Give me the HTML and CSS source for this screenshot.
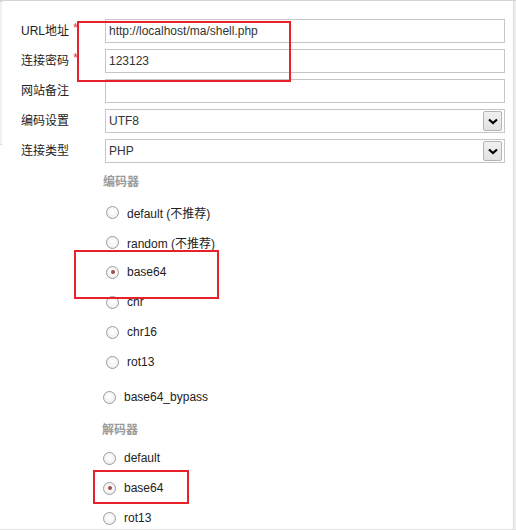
FILE: index.html
```html
<!DOCTYPE html>
<html lang="zh">
<head>
<meta charset="utf-8">
<link rel="stylesheet" href="styles.css">
</head>
<body>
<div class="frame">
  <div class="edge-left"></div>
  <div class="edge-right"></div>
  <form class="form">
    <div class="row">
      <label class="label">URL地址 <span class="req">*</span></label>
      <div class="field">http://localhost/ma/shell.php</div>
    </div>
    <div class="row">
      <label class="label">连接密码 <span class="req">*</span></label>
      <div class="field">123123</div>
    </div>
    <div class="row">
      <label class="label">网站备注</label>
      <div class="field"></div>
    </div>
    <div class="row">
      <label class="label">编码设置</label>
      <div class="field select">UTF8<span class="arrow"><svg width="10" height="7" viewBox="0 0 10 7"><path d="M1 1.5 L5 5 L9 1.5" fill="none" stroke="#000" stroke-width="2.2"/></svg></span></div>
    </div>
    <div class="row">
      <label class="label">连接类型</label>
      <div class="field select">PHP<span class="arrow"><svg width="10" height="7" viewBox="0 0 10 7"><path d="M1 1.5 L5 5 L9 1.5" fill="none" stroke="#000" stroke-width="2.2"/></svg></span></div>
    </div>

    <div class="group enc">
      <div class="ghead">编码器</div>
      <div class="opt"><span class="radio"></span>default (不推荐)</div>
      <div class="opt"><span class="radio"></span>random (不推荐)</div>
      <div class="opt"><span class="radio on"></span>base64</div>
      <div class="opt"><span class="radio"></span>chr</div>
      <div class="opt"><span class="radio"></span>chr16</div>
      <div class="opt"><span class="radio"></span>rot13</div>
    </div>
    <div class="group dec">
      <div class="opt"><span class="radio"></span>base64_bypass</div>
      <div class="ghead">解码器</div>
      <div class="opt"><span class="radio"></span>default</div>
      <div class="opt"><span class="radio on"></span>base64</div>
      <div class="opt"><span class="radio"></span>rot13</div>
    </div>
  </form>
  <div class="mark m1"></div>
  <div class="mark m2"></div>
  <div class="mark m3"></div>
</div>
</body>
</html>
```
FILE: styles.css
```css
html, body {
  margin: 0;
  padding: 0;
  background: #fff;
}
.frame {
  position: relative;
  width: 516px;
  height: 530px;
  overflow: hidden;
  box-sizing: border-box;
  border-top: 1px solid #d4d4d4;
  border-bottom: 1px solid #e2e2e2;
  font-family: "Liberation Sans", "Noto Sans CJK SC", sans-serif;
  font-size: 12px;
  color: #333;
}
.edge-left {
  position: absolute;
  left: 0;
  top: 0;
  width: 2px;
  height: 143px;
  background: #f1f1f1;
  border-bottom: 1px solid #d8d8d8;
  box-shadow: inset 0 51px 0 -50px #d4d4d4;
}
.edge-right {
  position: absolute;
  right: 0;
  top: 0;
  width: 2px;
  height: 530px;
  background: #ececec;
  border-left: 1px solid #dcdcdc;
}
.form {
  padding-top: 18px;
  margin: 0;
}
.row {
  display: flex;
  align-items: center;
  height: 24px;
  margin-bottom: 6px;
}
.label {
  width: 84px;
  padding-left: 21px;
  line-height: 24px;
  color: #222;
  white-space: nowrap;
}
.req {
  color: #e53030;
  font-size: 12px;
  position: relative;
  top: -3px;
  margin-left: 1px;
}
.field {
  position: relative;
  box-sizing: border-box;
  width: 400px;
  height: 24px;
  border: 1px solid #c6c6c6;
  padding-left: 3px;
  line-height: 22px;
  color: #333;
}
.arrow {
  position: absolute;
  right: 2px;
  top: 1px;
  box-sizing: border-box;
  width: 19px;
  height: 20px;
  border: 1px solid #b4b4b4;
  border-radius: 2px;
  background: linear-gradient(#f0f0f0, #e2e2e2);
  display: flex;
  align-items: center;
  justify-content: center;
}
.group {
  display: flex;
  flex-direction: column;
}
.enc {
  padding-left: 106px;
  margin-top: 7px;
}
.dec {
  padding-left: 103px;
  margin-top: 5px;
}
.ghead {
  height: 24px;
  line-height: 24px;
  color: #9a9a9a;
  font-weight: bold;
  margin-left: -3px;
  margin-bottom: 3px;
}
.dec .ghead {
  margin-left: -1px;
  margin-top: 6px;
  margin-bottom: 1px;
}
.opt {
  display: flex;
  align-items: center;
  height: 30px;
  color: #222;
}
.radio {
  box-sizing: border-box;
  width: 13px;
  height: 13px;
  border: 1px solid #9c9c9c;
  border-radius: 50%;
  background: radial-gradient(circle at 50% 40%, #fff 0%, #f3f3f3 60%, #e4e4e4 100%);
  margin-right: 8px;
  display: flex;
  align-items: center;
  justify-content: center;
}
.radio.on::after {
  content: "";
  width: 4px;
  height: 4px;
  border-radius: 50%;
  background: #9a4b4b;
}
.mark {
  position: absolute;
  box-sizing: border-box;
  border: 2px solid #e8202a;
}
.m1 {
  left: 77px;
  top: 20px;
  width: 214px;
  height: 61px;
}
.m2 {
  left: 74px;
  top: 249px;
  width: 145px;
  height: 49px;
}
.m3 {
  left: 93px;
  top: 469px;
  width: 96px;
  height: 34px;
}
```
